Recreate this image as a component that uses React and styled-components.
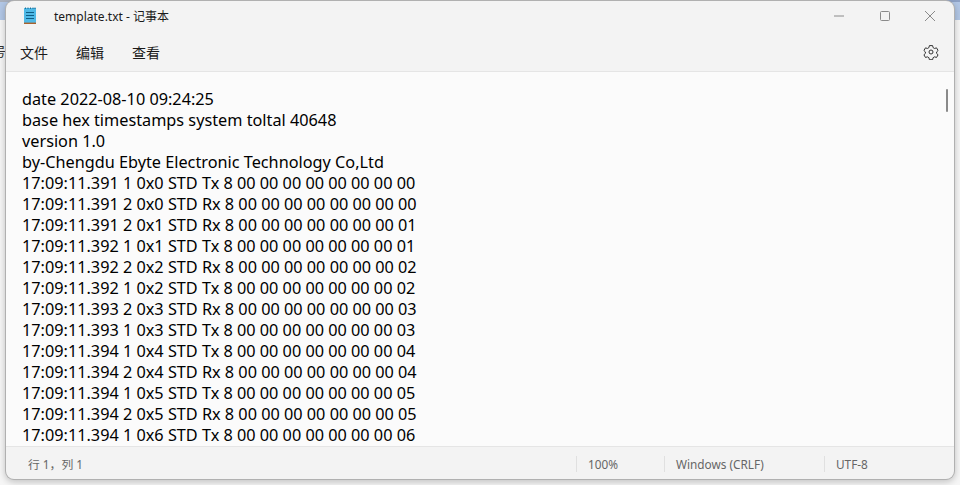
import React from "react";
import styled, { createGlobalStyle } from "styled-components";

const GlobalStyle = createGlobalStyle`
  html, body {
    margin: 0;
    padding: 0;
    height: 100%;
    background: #fff;
    overflow: hidden;
  }
`;

const Desktop = styled.div`
  position: relative;
  width: 960px;
  height: 485px;
  overflow: hidden;
  padding: 1px 6px 6px 6px;
  box-sizing: border-box;
  background: linear-gradient(to bottom, #b2c7e6 0, #b2c7e6 20px, #f6f6f6 20px);
  font-family: "Noto Sans", "Noto Sans CJK SC", sans-serif;
`;

const TopStrip = styled.div`
  position: absolute;
  left: 0;
  right: 0;
  top: 0;
  height: 2px;
  background: repeating-linear-gradient(to right, #a9b0bd 0, #a9b0bd 70px, #8ea2c6 70px, #8ea2c6 120px);
`;

const BehindGlyph = styled.span`
  position: absolute;
  left: -7px;
  top: 43px;
  font-size: 13px;
  line-height: 16px;
  color: #333;
`;

const Window = styled.div`
  position: relative;
  z-index: 1;
  display: flex;
  flex-direction: column;
  height: 478px;
  background: #f3f3f3;
  border-radius: 8px;
  overflow: hidden;
  box-shadow: 0 0 0 1px #b0b0b0, 0 2px 7px 1px rgba(0, 0, 0, 0.22);
`;

const TitleBar = styled.div`
  display: flex;
  align-items: center;
  height: 30px;
  flex: none;
  padding: 0 1px 0 16px;
  font-size: 12px;
  color: #1a1a1a;
`;

const AppIcon = styled.svg`
  width: 16px;
  height: 18px;
  flex: none;
  margin-right: 16px;
`;

const TitleText = styled.span`
  flex: 1;
`;

const CaptionButton = styled.div`
  width: 45.5px;
  height: 30px;
  display: flex;
  align-items: center;
  justify-content: center;

  svg {
    width: 12px;
    height: 12px;
  }
`;

const MenuBar = styled.div`
  display: flex;
  align-items: center;
  box-sizing: border-box;
  height: 41px;
  flex: none;
  padding: 2px 15px 0 0;
  border-bottom: 1px solid #e5e5e5;
`;

const MenuItem = styled.div`
  width: 28px;
  margin-left: ${(props) => (props.$first ? "14px" : "28px")};
  font-size: 14px;
  color: #1a1a1a;
`;

const Spacer = styled.div`
  flex: 1;
`;

const GearIcon = styled.svg`
  width: 16px;
  height: 16px;
  color: #333;
`;

const Editor = styled.div`
  position: relative;
  flex: 1;
  min-height: 0;
  overflow: hidden;
  background: #fbfbfb;
  padding: 17px 0 0 16px;
  font-size: 16.25px;
  line-height: 21px;
  color: #000;
  white-space: pre;
`;

const Line = styled.div`
  height: 21px;
`;

const ScrollThumb = styled.div`
  position: absolute;
  top: 17px;
  right: 6px;
  width: 2px;
  height: 23px;
  border-radius: 1px;
  background: #8a8a8a;
`;

const StatusBar = styled.div`
  display: flex;
  align-items: center;
  box-sizing: border-box;
  height: 33px;
  flex: none;
  padding-top: 2px;
  border-top: 1px solid #e5e5e5;
  font-size: 11.8px;
  color: #666;
`;

const StatusCell = styled.div`
  box-sizing: border-box;
  width: ${(props) => props.$width}px;
  flex: ${(props) => (props.$grow ? 1 : "none")};
  height: 16px;
  line-height: 16px;
  padding-left: ${(props) => (props.$grow ? 22 : 11)}px;
  border-left: ${(props) => (props.$grow ? "none" : "1px solid #e0e0e0")};
`;

const lines = [
  "date 2022-08-10 09:24:25",
  "base hex timestamps system toltal 40648",
  "version 1.0",
  "by-Chengdu Ebyte Electronic Technology Co,Ltd",
  "17:09:11.391 1 0x0 STD Tx 8 00 00 00 00 00 00 00 00",
  "17:09:11.391 2 0x0 STD Rx 8 00 00 00 00 00 00 00 00",
  "17:09:11.391 2 0x1 STD Rx 8 00 00 00 00 00 00 00 01",
  "17:09:11.392 1 0x1 STD Tx 8 00 00 00 00 00 00 00 01",
  "17:09:11.392 2 0x2 STD Rx 8 00 00 00 00 00 00 00 02",
  "17:09:11.392 1 0x2 STD Tx 8 00 00 00 00 00 00 00 02",
  "17:09:11.393 2 0x3 STD Rx 8 00 00 00 00 00 00 00 03",
  "17:09:11.393 1 0x3 STD Tx 8 00 00 00 00 00 00 00 03",
  "17:09:11.394 1 0x4 STD Tx 8 00 00 00 00 00 00 00 04",
  "17:09:11.394 2 0x4 STD Rx 8 00 00 00 00 00 00 00 04",
  "17:09:11.394 1 0x5 STD Tx 8 00 00 00 00 00 00 00 05",
  "17:09:11.394 2 0x5 STD Rx 8 00 00 00 00 00 00 00 05",
  "17:09:11.394 1 0x6 STD Tx 8 00 00 00 00 00 00 00 06",
];

const NotepadIcon = () => (
  <AppIcon viewBox="0 0 16 18">
    <rect x="2" y="1" width="12" height="15" fill="#4fb9e6" />
    <rect x="2" y="15.6" width="12" height="1.4" fill="#a9622d" />
    <path d="M3.5 2V0.5M6 2V0.5M8.5 2V0.5M11 2V0.5M13 2V0.5" stroke="#1f6f96" strokeWidth="1" />
    <path d="M4 5.5h8M4 8.5h8M4 11.5h8" stroke="#0f5f86" strokeWidth="1" />
  </AppIcon>
);

const Gear = () => (
  <GearIcon viewBox="0 0 24 24" fill="none" stroke="currentColor" strokeWidth="1.5" strokeLinejoin="round">
    <path d="M9.6 2.4h4.8l.7 3 2.2 1.3 3-.9 2.3 4-2.2 2.1v2.2l2.2 2.1-2.3 4-3-.9-2.2 1.3-.7 3H9.6l-.7-3-2.2-1.3-3 .9-2.3-4 2.2-2.1v-2.2L1.4 9.8l2.3-4 3 .9 2.2-1.3z" />
    <circle cx="12" cy="12" r="3" />
  </GearIcon>
);

export default function App() {
  return (
    <Desktop>
      <GlobalStyle />
      <TopStrip />
      <BehindGlyph>号</BehindGlyph>
      <Window>
        <TitleBar>
          <NotepadIcon />
          <TitleText>template.txt - 记事本</TitleText>
          <CaptionButton>
            <svg viewBox="0 0 12 12"><path d="M1 6h10" stroke="#8a8a8a" strokeWidth="1" /></svg>
          </CaptionButton>
          <CaptionButton>
            <svg viewBox="0 0 12 12"><rect x="1.5" y="1.5" width="9" height="9" rx="1" fill="none" stroke="#8a8a8a" strokeWidth="1" /></svg>
          </CaptionButton>
          <CaptionButton>
            <svg viewBox="0 0 12 12"><path d="M1 1l10 10M11 1L1 11" stroke="#8a8a8a" strokeWidth="1" /></svg>
          </CaptionButton>
        </TitleBar>
        <MenuBar>
          <MenuItem $first>文件</MenuItem>
          <MenuItem>编辑</MenuItem>
          <MenuItem>查看</MenuItem>
          <Spacer />
          <Gear />
        </MenuBar>
        <Editor>
          {lines.map((line) => (
            <Line key={line}>{line}</Line>
          ))}
          <ScrollThumb />
        </Editor>
        <StatusBar>
          <StatusCell $grow>行 1，列 1</StatusCell>
          <StatusCell $width={88}>100%</StatusCell>
          <StatusCell $width={160}>Windows (CRLF)</StatusCell>
          <StatusCell $width={130}>UTF-8</StatusCell>
        </StatusBar>
      </Window>
    </Desktop>
  );
}
